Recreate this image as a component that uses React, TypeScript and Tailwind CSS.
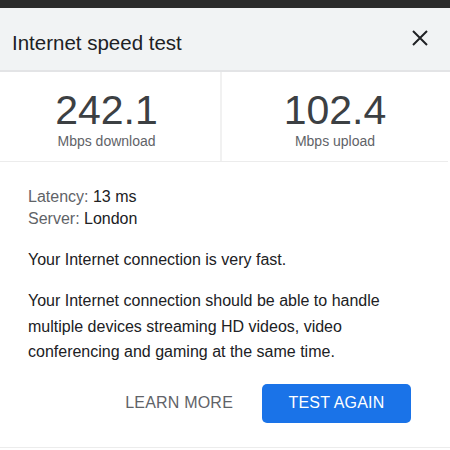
import React from "react";

const font = { fontFamily: "'Liberation Sans', Arial, sans-serif" };

function Stat({ value, label }: { value: string; label: string }) {
  return (
    <div className="flex flex-col items-center pt-[17px]">
      <div className="text-[41px] leading-[42px] text-[#3c4043]">{value}</div>
      <div className="text-[14px] leading-[16px] text-[#5f6368] mt-[2px]">{label}</div>
    </div>
  );
}

export default function App() {
  return (
    <div className="w-[450px] h-[450px] bg-white overflow-hidden" style={font}>
      <div className="h-[8px] bg-[#2b2b2b]" />
      <div className="h-[64px] bg-[#f1f3f4] border-b-2 border-[#e3e4e6] flex items-center justify-between pl-[12px] pr-[21px]">
        <h1 className="text-[20.5px] text-[#202124] pt-[8px]">Internet speed test</h1>
        <svg width="18" height="18" viewBox="0 0 18 18" className="mb-[2px]">
          <path d="M2 2 L16 16 M16 2 L2 16" stroke="#202124" strokeWidth="2" />
        </svg>
      </div>
      <div className="grid grid-cols-[222px_1fr] h-[90px] border-b border-[#ececec] mr-[2px]">
        <div className="border-r-2 border-[#f1f1f1] pr-[7px]">
          <Stat value="242.1" label="Mbps download" />
        </div>
        <Stat value="102.4" label="Mbps upload" />
      </div>
      <div className="pl-[28px] pr-[24px] pt-[24px] text-[#202124]">
        <p className="text-[16px] leading-[22px]">
          <span className="text-[#5f6368]">Latency: </span>13 ms
        </p>
        <p className="text-[16px] leading-[22px]">
          <span className="text-[#5f6368]">Server: </span>London
        </p>
        <p className="text-[16px] leading-[24px] mt-[18px]">Your Internet connection is very fast.</p>
        <p className="text-[16px] leading-[25.5px] mt-[16px]">
          Your Internet connection should be able to handle multiple devices streaming HD videos, video conferencing and gaming at the same time.
        </p>
      </div>
      <div className="flex justify-end items-center pr-[39px] mt-[19px] gap-[29px]">
        <button className="text-[16px] text-[#5f6368] tracking-[0.2px]">LEARN MORE</button>
        <button className="w-[149px] h-[39px] rounded-[5px] bg-[#1a73e8] text-white text-[16px] tracking-[0.2px]">
          TEST AGAIN
        </button>
      </div>
      <div className="mt-[24px] border-b border-[#ececec]" />
    </div>
  );
}
